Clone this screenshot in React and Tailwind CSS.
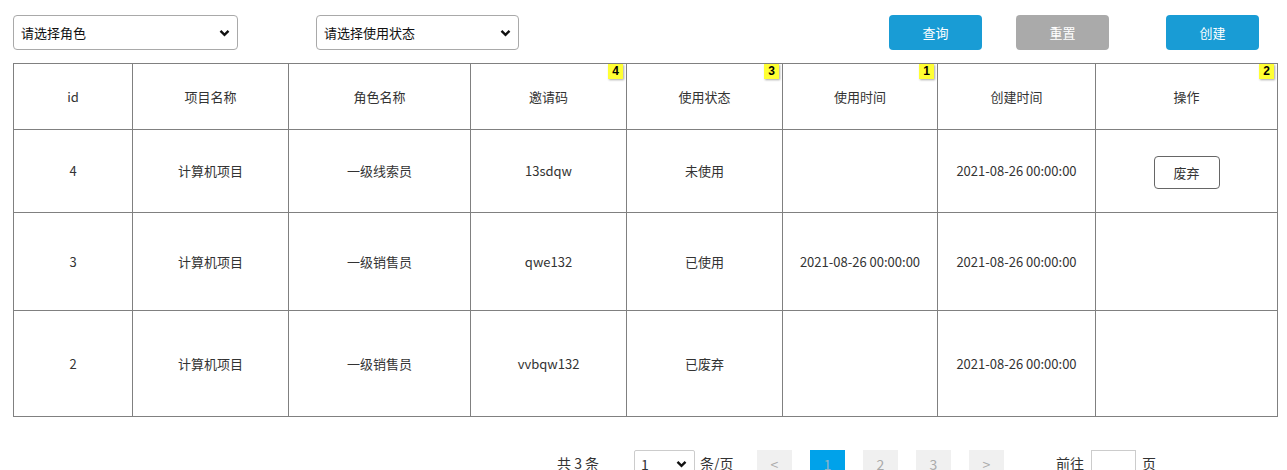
import React, { useState } from 'react'

const font = { fontFamily: '"Microsoft YaHei", "Noto Sans CJK SC", "Noto Sans", sans-serif' }

const cols = [
  { key: 'id', label: 'id', w: 'w-[119px]' },
  { key: 'project', label: '项目名称', w: 'w-[156px]' },
  { key: 'role', label: '角色名称', w: 'w-[182px]' },
  { key: 'code', label: '邀请码', w: 'w-[156px]', badge: '4' },
  { key: 'status', label: '使用状态', w: 'w-[156px]', badge: '3' },
  { key: 'usedAt', label: '使用时间', w: 'w-[155px]', badge: '1' },
  { key: 'createdAt', label: '创建时间', w: 'w-[158px]' },
  { key: 'op', label: '操作', w: 'w-[182px]', badge: '2' }
]

const rows = [
  { id: 4, project: '计算机项目', role: '一级线索员', code: '13sdqw', status: '未使用', usedAt: '', createdAt: '2021-08-26 00:00:00', canDiscard: true, h: 'h-[83px]' },
  { id: 3, project: '计算机项目', role: '一级销售员', code: 'qwe132', status: '已使用', usedAt: '2021-08-26 00:00:00', createdAt: '2021-08-26 00:00:00', h: 'h-[98px]' },
  { id: 2, project: '计算机项目', role: '一级销售员', code: 'vvbqw132', status: '已废弃', usedAt: '', createdAt: '2021-08-26 00:00:00', h: 'h-[106px]' }
]

const Chevron = () => (
  <svg className="pointer-events-none absolute right-[8px] top-1/2 -translate-y-1/2" width="11" height="8" viewBox="0 0 11 8">
    <path d="M1.5 1.8 L5.5 5.8 L9.5 1.8" fill="none" stroke="#111" strokeWidth="2.4" />
  </svg>
)

const Select = ({ width, placeholder }) => (
  <div className={`relative ${width} h-[35px]`}>
    <select defaultValue="" className="appearance-none w-full h-full border border-[#a9a9a9] rounded-[4px] bg-white pl-[7px] text-[13px] text-[#111] outline-none">
      <option value="">{placeholder}</option>
    </select>
    <Chevron />
  </div>
)

const Badge = ({ n }) => (
  <span className="absolute right-[3px] top-0 w-[15px] h-[15px] bg-[#ffff33] shadow-[1px_1px_2px_rgba(0,0,0,0.35)] text-[12px] font-bold leading-[14px] text-center text-black" style={{ fontFamily: '"Liberation Sans", sans-serif' }}>
    {n}
  </span>
)

const PageBox = ({ children, active }) => (
  <div className={`w-[35px] h-[28px] flex items-center justify-center text-[14px] leading-[16px] ${active ? 'bg-[#00a2ea] text-[#8fb4c8]' : 'bg-[#f0f0f0] text-[#aaa]'}`}>
    {children}
  </div>
)

export default function App() {
  const [page] = useState(1)

  return (
    <div className="bg-white w-[1287px] h-[470px] overflow-hidden text-[#333]" style={font}>
      <div className="flex items-center pt-[15px] pl-[13px] h-[50px]">
        <Select width="w-[225px]" placeholder="请选择角色" />
        <div className="ml-[78px]">
          <Select width="w-[203px]" placeholder="请选择使用状态" />
        </div>
        <button className="ml-[370px] w-[93px] h-[35px] rounded-[4px] bg-[#199cd5] text-white text-[13px]">查询</button>
        <button className="ml-[34px] w-[93px] h-[35px] rounded-[4px] bg-[#aaaaaa] text-white text-[13px]">重置</button>
        <button className="ml-[57px] w-[93px] h-[35px] rounded-[4px] bg-[#199cd5] text-white text-[13px]">创建</button>
      </div>

      <div className="pl-[13px] pt-[13px]">
        <table className="border-collapse text-[13px] text-center">
          <thead>
            <tr className="h-[66px]">
              {cols.map(c => (
                <th key={c.key} className={`relative ${c.w} border border-[#808080] font-normal p-0`}>
                  {c.label}
                  {c.badge && <Badge n={c.badge} />}
                </th>
              ))}
            </tr>
          </thead>
          <tbody>
            {rows.map(r => (
              <tr key={r.id} className={r.h}>
                {cols.map(c => (
                  <td key={c.key} className="border border-[#808080] p-0">
                    {c.key === 'op'
                      ? r.canDiscard && (
                          <button className="w-[66px] h-[33px] mt-[3px] border border-[#666] rounded-[4px] bg-white text-[13px] text-[#333]">废弃</button>
                        )
                      : r[c.key]}
                  </td>
                ))}
              </tr>
            ))}
          </tbody>
        </table>
      </div>

      <div className="flex items-start mt-[33px] pl-[557px] text-[14px] leading-[16px] text-[#333]">
        <span className="w-[44px] mt-[5px] whitespace-nowrap">共 3 条</span>
        <div className="relative ml-[33px] w-[61px] h-[28px]">
          <select defaultValue="1" className="appearance-none w-full h-full border border-[#ccc] rounded-[2px] bg-white pl-[6px] text-[14px] outline-none">
            <option value="1">1</option>
          </select>
          <Chevron />
        </div>
        <span className="ml-[5px] mt-[5px] w-[37px] whitespace-nowrap">条/页</span>
        <div className="ml-[20px] flex gap-[18px]">
          <PageBox>&lt;</PageBox>
          {[1, 2, 3].map(n => <PageBox key={n} active={n === page}>{n}</PageBox>)}
          <PageBox>&gt;</PageBox>
        </div>
        <span className="ml-[52px] mt-[5px] w-[28px] whitespace-nowrap">前往</span>
        <input className="ml-[7px] w-[45px] h-[28px] border border-[#ccc] outline-none" />
        <span className="ml-[6px] mt-[5px]">页</span>
      </div>
    </div>
  )
}
